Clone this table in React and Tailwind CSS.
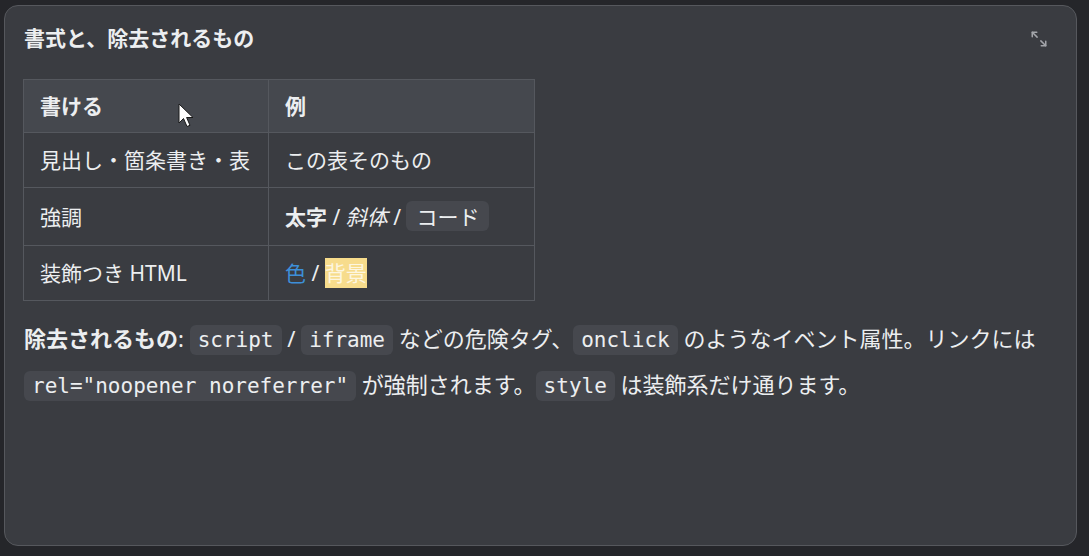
import React from 'react'

const rows = [
  { label: '見出し・箇条書き・表', example: <span>この表そのもの</span>, pad: 'py-[12px]' },
  {
    label: '強調',
    pad: 'py-[13px]',
    example: (
      <span>
        <b className="font-bold">太字</b> / <i className="italic">斜体</i> /{' '}
        <code className="rounded-md bg-[#46484e] px-[10px] py-[0px] font-['Noto_Sans_CJK_JP',sans-serif] text-[21px]">コード</code>
      </span>
    ),
  },
  {
    label: '装飾つき HTML',
    pad: 'py-[12px]',
    example: (
      <span>
        <span className="text-[#3d8fd8]">色</span> / <span className="bg-[#f7dc8c] py-[1px] text-[#fdf6e0]">背景</span>
      </span>
    ),
  },
]

const Code = ({ children }) => (
  <code className="rounded-md bg-[#46484e] px-[8px] py-[3px] font-['DejaVu_Sans_Mono',monospace] text-[21px] text-[#eceef0]">
    {children}
  </code>
)

export default function App() {
  return (
    <div className="min-h-[556px] bg-[#25262a] pl-[4px] pr-[12px] pt-[5px] pb-[10px] font-['Noto_Sans','Noto_Sans_CJK_JP',sans-serif] text-[#eceef0]">
      <div className="relative h-[541px] rounded-[14px] border border-[#56585d] bg-[#3a3c41] px-[19px] pt-[16px]">
        {/* header */}
        <div className="flex items-start justify-between">
          <h2 className="text-[21px] font-bold leading-[32px]">書式と、除去されるもの</h2>
          <svg className="mr-[9px] mt-[8px] h-[18px] w-[18px] text-[#a3a5aa]" viewBox="0 0 24 24" fill="none" stroke="currentColor" strokeWidth="2" strokeLinecap="round" strokeLinejoin="round">
            <polyline points="3 9 3 3 9 3" />
            <line x1="3" y1="3" x2="9.5" y2="9.5" />
            <polyline points="21 15 21 21 15 21" />
            <line x1="21" y1="21" x2="14.5" y2="14.5" />
          </svg>
        </div>

        {/* table */}
        <table className="mt-[25px] -ml-[1px] border-collapse text-[21px] leading-[30px]">
          <thead>
            <tr className="bg-[#45484e]">
              <th className="w-[245px] border border-[#55585e] px-[16px] py-[11px] text-left font-bold">書ける</th>
              <th className="w-[266px] border border-[#55585e] px-[16px] py-[11px] text-left font-bold">例</th>
            </tr>
          </thead>
          <tbody>
            {rows.map((r) => (
              <tr key={r.label}>
                <td className={`border border-[#55585e] px-[16px] ${r.pad}`}>{r.label}</td>
                <td className={`border border-[#55585e] px-[16px] ${r.pad}`}>{r.example}</td>
              </tr>
            ))}
          </tbody>
        </table>

        {/* notes */}
        <p className="mt-[15px] text-[22px] leading-[44px]">
          <b className="font-bold">除去されるもの</b>: <Code>script</Code> / <Code>iframe</Code> などの危険タグ、<Code>onclick</Code> のようなイベント属性。リンクには <Code>rel="noopener noreferrer"</Code> が強制されます。<Code>style</Code> は装飾系だけ通ります。
        </p>

        {/* cursor */}
        <svg className="absolute left-[173px] top-[97px] h-[26px] w-[17px]" viewBox="0 0 17 26">
          <path d="M1 1 L1 20 L5.5 15.5 L9 23.5 L12 22.3 L8.6 14.5 L15 14.5 Z" fill="#ffffff" stroke="#1a1a1a" strokeWidth="1" strokeLinejoin="round" />
        </svg>
      </div>
    </div>
  )
}
